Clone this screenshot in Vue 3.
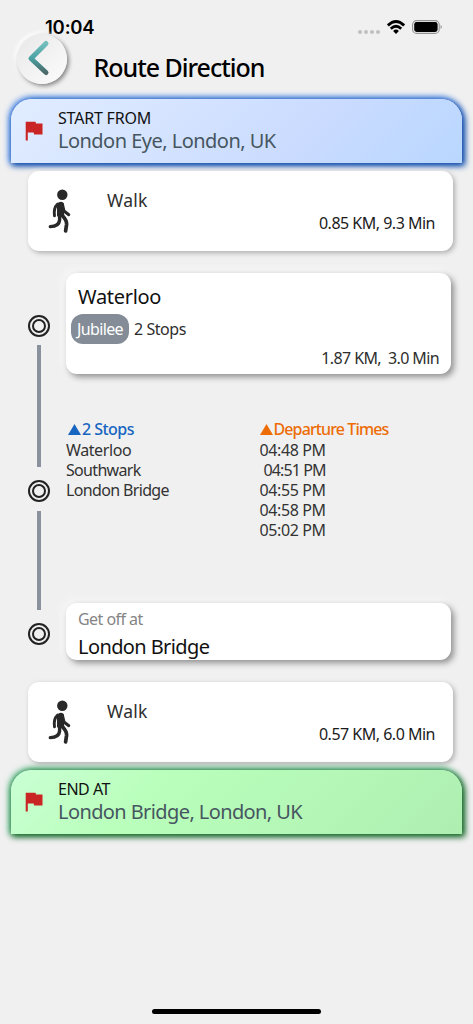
<script setup>
const stops = ['Waterloo', 'Southwark', 'London Bridge']
const times = ['04:48 PM', '04:51 PM', '04:55 PM', '04:58 PM', '05:02 PM']
</script>

<template>
  <main class="screen">
    <div class="status">
      <span class="clock">10:04</span>
      <div class="signals">
        <svg class="dots" width="22" height="4" viewBox="0 0 22 4" fill="#c0c0c0">
          <circle cx="2" cy="2" r="2" /><circle cx="8" cy="2" r="2" /><circle cx="14" cy="2" r="2" /><circle cx="20" cy="2" r="2" />
        </svg>
        <svg class="wifi" width="18" height="14" viewBox="0 0 18 14" fill="none" stroke="#000" stroke-width="2.8">
          <path d="M.9 5.4Q9-2.3 17.1 5.4" /><path d="M3.8 8.7q5.2-4.8 10.4 0" /><path d="M6.1 10.9Q9 8.3 11.9 10.9L9 13.9z" fill="#000" stroke="none" />
        </svg>
        <svg class="battery" width="30" height="14" viewBox="0 0 30 14">
          <rect x=".6" y=".6" width="26.6" height="12.8" rx="4" fill="none" stroke="#929292" stroke-width="1.1" />
          <rect x="2.2" y="2.1" width="23.4" height="9.8" rx="2.4" />
          <path d="M28.6 4.8q2.3 2.2 0 4.4z" fill="#888" />
        </svg>
      </div>
    </div>

    <header class="header">
      <button class="back" aria-label="Back">
        <svg width="50" height="50" viewBox="0 0 50 50">
          <defs>
            <linearGradient id="arrow" x1="0" y1="0" x2="0" y2="1">
              <stop offset="0" stop-color="#74bdbd" /><stop offset=".5" stop-color="#4ba3a4" /><stop offset="1" stop-color="#4c6969" />
            </linearGradient>
          </defs>
          <path d="M29 9.5 14 24.5 29 38.5" fill="none" stroke="url(#arrow)" stroke-width="5" stroke-linecap="round" stroke-linejoin="round" />
        </svg>
      </button>
      <h1 class="title">Route Direction</h1>
    </header>

    <section class="banner start">
      <svg class="flag" width="18" height="20" viewBox="0 0 18 20"><path d="M.7.7h9.8l.5 1.9h6.5v11H9.2l-.6-2H2.8v7.8H.7z" fill="#c92525" /></svg>
      <div>
        <div class="label">START FROM</div>
        <div class="place start-place">London Eye, London, UK</div>
      </div>
    </section>

    <section class="walk">
      <svg class="walker" width="23" height="45" viewBox="0 0 23 45" fill="none" stroke="#292929" stroke-linecap="round" stroke-linejoin="round">
        <circle cx="14.3" cy="5.8" r="5.2" fill="#292929" stroke="none" />
        <path d="M9.6 15.2q2.8-3 5.6-.8l.4 12.4H9.6z" fill="#292929" stroke-width="1.2" />
        <path d="M9.6 15q-4.3 4-3.1 11.8" stroke-width="2.9" />
        <path d="M14.5 15.5 16 22l4.8 3.7" stroke-width="3" />
        <path d="M11.6 26v5q-.5 6.3-9.3 6.6" stroke-width="3.4" />
        <path d="M13.8 26q5.2 5.5 4.8 9.3l-1 6.6" stroke-width="3.7" />
      </svg>
      <span class="walk-name">Walk</span>
      <span class="walk-info">0.85 KM, 9.3 Min</span>
    </section>

    <section class="ride">
      <div class="rail">
        <i class="node"></i>
        <i class="line first"></i>
        <i class="node"></i>
        <i class="line second"></i>
        <i class="node"></i>
      </div>
      <div class="ride-body">
        <div class="card board">
          <div class="station"><span class="waterloo">Waterloo</span></div>
          <div class="service"><span class="badge"><span>Jubilee</span></span><span class="count">2 Stops</span></div>
          <div class="ride-info">1.87 KM,&nbsp; 3.0 Min</div>
        </div>
        <div class="details">
          <div class="col stops">
            <div class="head"><svg width="13" height="11" viewBox="0 0 13 11"><path d="M6.5 0 13 11H0z" fill="currentColor" /></svg><span>2 Stops</span></div>
            <div v-for="(s, i) in stops" :key="s" :class="['row', 'stop-' + i]">{{ s }}</div>
          </div>
          <div class="col times">
            <div class="head"><svg width="13" height="11" viewBox="0 0 13 11"><path d="M6.5 0 13 11H0z" fill="currentColor" /></svg><span>Departure Times</span></div>
            <div v-for="(t, i) in times" :key="t" :class="['row', { narrow: i === 1 }]">{{ t }}</div>
          </div>
        </div>
        <div class="card alight">
          <div class="hint">Get off at</div>
          <div class="station bridge">London Bridge</div>
        </div>
      </div>
    </section>

    <section class="walk">
      <svg class="walker" width="23" height="45" viewBox="0 0 23 45" fill="none" stroke="#292929" stroke-linecap="round" stroke-linejoin="round">
        <circle cx="14.3" cy="5.8" r="5.2" fill="#292929" stroke="none" />
        <path d="M9.6 15.2q2.8-3 5.6-.8l.4 12.4H9.6z" fill="#292929" stroke-width="1.2" />
        <path d="M9.6 15q-4.3 4-3.1 11.8" stroke-width="2.9" />
        <path d="M14.5 15.5 16 22l4.8 3.7" stroke-width="3" />
        <path d="M11.6 26v5q-.5 6.3-9.3 6.6" stroke-width="3.4" />
        <path d="M13.8 26q5.2 5.5 4.8 9.3l-1 6.6" stroke-width="3.7" />
      </svg>
      <span class="walk-name">Walk</span>
      <span class="walk-info">0.57 KM, 6.0 Min</span>
    </section>

    <section class="banner end">
      <svg class="flag" width="18" height="20" viewBox="0 0 18 20"><path d="M.7.7h9.8l.5 1.9h6.5v11H9.2l-.6-2H2.8v7.8H.7z" fill="#c92525" /></svg>
      <div>
        <div class="label end-label">END AT</div>
        <div class="place end-place">London Bridge, London, UK</div>
      </div>
    </section>

    <div class="home"></div>
  </main>
</template>

<style>
body { background: #f0f0f0; }
</style>

<style scoped>
.screen {
  box-sizing: border-box;
  width: 473px;
  height: 1024px;
  overflow: hidden;
  display: flex;
  flex-direction: column;
  background: #f0f0f0;
  color: #2e2e2e;
  font-family: "Noto Sans", "Open Sans", sans-serif;
  white-space: nowrap;
}
svg { display: block; flex: none; }
.status { display: flex; justify-content: space-between; height: 34px; padding: 0 31px 0 45px; }
.clock { font: 600 18.5px/24px Inter, sans-serif; color: #000; padding-top: 15px; letter-spacing: -.2px; }
.signals { display: flex; padding-top: 20px; }
.dots { margin: 10px 7px 0 0; }
.battery { margin-left: 7px; }
.header { display: flex; height: 65px; padding-left: 17px; }
.back {
  width: 50px; height: 50px; padding: 0; border: 0; border-radius: 50%; flex: none;
  background: linear-gradient(135deg, #e8e8e8, #fcfcfc);
  box-shadow: 2px 2px 4px #858585, -2px -2px 4px #fff;
}
.title { margin: 16px 0 0 26.5px; font-size: 25px; line-height: 34px; font-weight: 500; color: #000; letter-spacing: -1.02px; }
.banner {
  box-sizing: border-box; display: flex; flex: none;
  width: 451px; height: 64px; margin-left: 11px; padding: 9px 0 0 14px;
  border-radius: 21px 21px 0 0;
}
.start {
  background: linear-gradient(135deg, #e1edff, #cadbff 65%, #b9d7ff);
  box-shadow: 2px 2px 6px 1px #0d48a5, -1px -1px 6px 1px #4689ee;
}
.end {
  background: linear-gradient(135deg, #caffd5, #baffbc 30%, #aeefb1);
  box-shadow: 2px 2px 6px 1px #176325, -1px -1px 6px 1px #48b77b;
}
.flag { margin: 13px 15px 0 0; }
.label { font-size: 16px; line-height: 21px; color: #111; letter-spacing: -.2px; }
.end-label { letter-spacing: -.5px; }
.place { font-size: 20px; line-height: 24px; color: #465660; }
.start-place { letter-spacing: -.53px; }
.end-place { letter-spacing: -.6px; }
.walk {
  box-sizing: border-box; display: flex; flex: none;
  width: 425px; height: 80px; margin: 8px 0 0 28px; padding: 18px 18px 0 20px;
  border-radius: 11px; background: #fff;
  box-shadow: 2px 2px 5px #b0b0b0, -1px -1px 4px #eee;
}
.walk-name { margin-left: 36px; font-size: 17.5px; line-height: 23px; letter-spacing: .25px; }
.walk-info { margin: 23px 0 0 auto; font-size: 16px; line-height: 22px; letter-spacing: -.5px; color: #1b1b1b; }
.ride { display: flex; flex: none; height: 388px; margin: 22px 0 21px 28px; }
.ride + .walk { margin-top: 0; }
.rail { display: flex; flex-direction: column; align-items: center; width: 22px; padding-top: 42px; }
.node {
  box-sizing: border-box; position: relative; width: 22px; height: 22px; flex: none;
  border: 2px solid #222; border-radius: 50%;
}
.node::after { content: ""; position: absolute; inset: 2px; border: 2px solid #222; border-radius: 50%; }
.line { width: 4px; background: #89919c; flex: none; }
.first { height: 122px; margin: 8px 0 13px; }
.second { height: 99px; margin: 9px 0 13px; }
.ride-body { width: 385px; margin-left: 16px; }
.card {
  box-sizing: border-box; border-radius: 11px; background: #fff;
  box-shadow: 3px 3px 6px #8f8f8f, -3px -3px 8px #f8f8f8;
}
.board { height: 101px; padding: 10px 12px 0 5px; }
.station { font-size: 20px; line-height: 28px; color: #111; }
.waterloo { margin-left: 7px; letter-spacing: -.3px; }
.service { display: flex; align-items: center; margin-top: 3px; height: 30px; }
.badge {
  display: flex; align-items: center; justify-content: center;
  width: 58px; height: 30px; border-radius: 12px; background: #848d97; color: #fff; font-size: 16px; letter-spacing: -.65px;
}
.count { margin-left: 5px; font-size: 16px; letter-spacing: -.45px; }
.ride-info { margin-top: 3px; text-align: right; font-size: 16px; line-height: 22px; letter-spacing: -.62px; }
.details { display: flex; height: 229px; padding-top: 45px; box-sizing: border-box; }
.col { width: 193px; }
.head { display: flex; align-items: center; height: 21px; font-size: 16px; font-weight: 500; padding-left: 2px; gap: 1px; }
.head span { margin-top: -1px; }
.stops .head { color: #1765c0; letter-spacing: -.55px; }
.times .head { color: #ed6c05; letter-spacing: -.88px; padding-left: 1px; }
.row { font-size: 16px; line-height: 20px; color: #333; }
.stop-0 { letter-spacing: -.4px; }
.stop-1 { letter-spacing: -.68px; }
.stop-2 { letter-spacing: -.65px; }
.times .row { padding-left: 1px; letter-spacing: -.38px; }
.times .narrow { padding-left: 5px; letter-spacing: -.88px; }
.alight { height: 57px; padding: 4px 11px 0 12px; }
.hint { font-size: 16px; line-height: 24px; color: #858585; letter-spacing: -.55px; }
.bridge { line-height: 32px; letter-spacing: -.6px; }
.end { margin-top: 8px; }
.home { width: 169px; height: 5px; margin: auto auto 10px 152px; border-radius: 3px; background: #000; flex: none; }
</style>
